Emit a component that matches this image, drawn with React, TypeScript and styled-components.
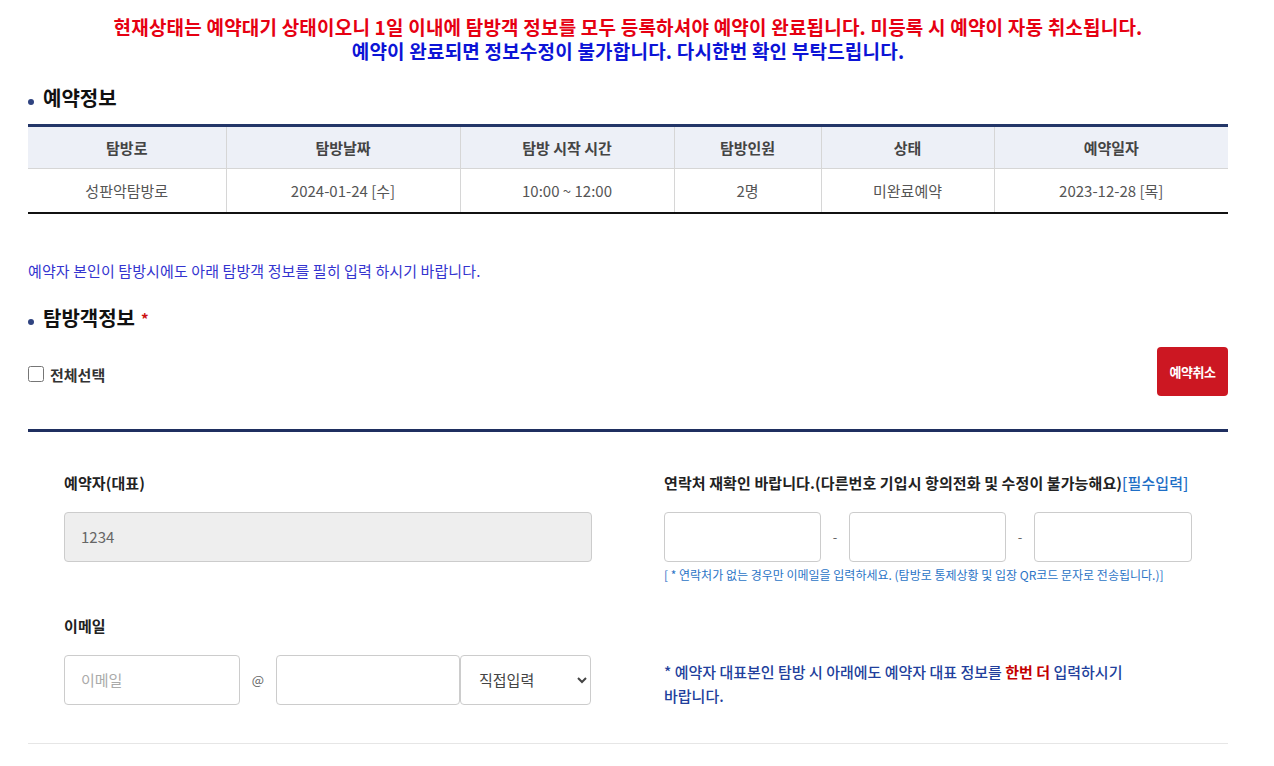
import React from 'react';
import styled, { createGlobalStyle } from 'styled-components';

const GlobalStyle = createGlobalStyle`
  body {
    margin: 0;
    background: #ffffff;
    font-family: 'Noto Sans CJK KR', 'Noto Sans', sans-serif;
    color: #222;
  }
  * {
    box-sizing: border-box;
  }
`;

const Page = styled.div`
  width: 1200px;
  margin: 0 28px;
  padding-top: 15px;
`;

const Notice = styled.div`
  text-align: center;
  font-size: 19px;
  font-weight: 700;
  line-height: 24px;
  letter-spacing: 0.2px;
`;

const NoticeLine = styled.p<{ $tone: 'red' | 'blue' }>`
  margin: 0;
  color: ${({ $tone }) => ($tone === 'red' ? '#e60012' : '#0c14d6')};
`;

const SectionTitle = styled.h2<{ $gap: number }>`
  display: flex;
  align-items: center;
  margin: ${({ $gap }) => $gap}px 0 0 0;
  font-size: 20px;
  font-weight: 700;
  line-height: 28px;
  color: #111;

  &::before {
    content: '';
    width: 6px;
    height: 6px;
    border-radius: 50%;
    background-color: #2f4380;
    margin: 8px 9px 0 0;
  }

  em {
    font-style: normal;
    color: #cc1111;
    font-size: 15px;
    margin-left: 6px;
    align-self: flex-start;
    margin-top: 1px;
  }
`;

const Table = styled.table`
  width: 100%;
  margin-top: 12px;
  border-collapse: collapse;
  table-layout: fixed;
  border-top: 3px solid #233668;
  border-bottom: 2px solid #111;
`;

const Th = styled.th`
  height: 43px;
  background-color: #edf0f7;
  font-size: 15px;
  font-weight: 700;
  color: #444;
  border-left: 1px solid #d6d6d6;
  border-bottom: 1px solid #d6d6d6;

  &:first-child {
    border-left: none;
  }
`;

const Td = styled.td`
  height: 44px;
  text-align: center;
  font-size: 15px;
  color: #555;
  border-left: 1px solid #d6d6d6;

  &:first-child {
    border-left: none;
  }
`;

const InfoText = styled.p`
  margin: 47px 0 0 0;
  font-size: 15px;
  line-height: 20px;
  color: #3434cf;
  letter-spacing: 0.1px;
`;

const ActionRow = styled.div`
  display: flex;
  align-items: center;
  justify-content: space-between;
  margin-top: 14px;
`;

const CheckLabel = styled.label`
  display: flex;
  align-items: center;
  gap: 6px;
  margin-top: 6px;
  font-size: 15px;
  font-weight: 700;
  color: #333;

  input {
    width: 16px;
    height: 16px;
    margin: 0;
  }
`;

const CancelButton = styled.button`
  width: 71px;
  height: 49px;
  border: none;
  border-radius: 4px;
  background-color: #cc1722;
  color: #ffffff;
  font-family: inherit;
  font-size: 13px;
  font-weight: 700;
  letter-spacing: -0.5px;
  cursor: pointer;
`;

const Divider = styled.div`
  margin-top: 33px;
  height: 3px;
  background-color: #1f2f60;
`;

const FormGrid = styled.div`
  display: grid;
  grid-template-columns: 1fr 1fr;
  column-gap: 72px;
  row-gap: 32px;
  padding: 41px 36px 38px;
  border-bottom: 1px solid #e6e6e6;
`;

const Field = styled.div`
  display: flex;
  flex-direction: column;
`;

const Label = styled.div`
  font-size: 15px;
  font-weight: 700;
  line-height: 20px;
  color: #222;
  letter-spacing: 0.1px;
  margin-bottom: 19px;
  white-space: nowrap;

  span {
    color: #1f6fc6;
    font-weight: 500;
  }
`;

const TextInput = styled.input<{ $width?: number }>`
  height: 50px;
  width: ${({ $width }) => ($width ? `${$width}px` : '100%')};
  padding: 0 16px;
  border: 1px solid #cccccc;
  border-radius: 4px;
  background-color: ${({ readOnly }) => (readOnly ? '#eeeeee' : '#ffffff')};
  font-family: inherit;
  font-size: 15px;
  color: #666;

  &::placeholder {
    color: #aaaaaa;
  }
`;

const InputRow = styled.div`
  display: flex;
  align-items: center;
`;

const Sep = styled.span<{ $width: number }>`
  width: ${({ $width }) => $width}px;
  text-align: center;
  font-size: 13px;
  color: #666;
`;

const Select = styled.select`
  height: 50px;
  width: 131px;
  padding: 0 10px 0 14px;
  border: 1px solid #cccccc;
  border-radius: 4px;
  background-color: #ffffff;
  font-family: inherit;
  font-size: 15px;
  color: #444;
`;

const HelpText = styled.p`
  margin: 4px 0 0 0;
  font-size: 12px;
  line-height: 18px;
  color: #2b74c6;
  white-space: nowrap;
`;

const Note = styled.p`
  align-self: end;
  margin: 0 0 -3px 0;
  max-width: 480px;
  font-size: 15px;
  font-weight: 500;
  line-height: 24px;
  color: #223f9c;
  word-break: keep-all;

  strong {
    color: #c40000;
    font-weight: 700;
  }
`;

const columns = [198, 234, 214, 147, 173, 234];
const headers = ['탐방로', '탐방날짜', '탐방 시작 시간', '탐방인원', '상태', '예약일자'];
const row = ['성판악탐방로', '2024-01-24 [수]', '10:00 ~ 12:00', '2명', '미완료예약', '2023-12-28 [목]'];

const App: React.FC = () => {
  return (
    <>
      <GlobalStyle />
      <Page>
        <Notice>
          <NoticeLine $tone='red'>
            현재상태는 예약대기 상태이오니 1일 이내에 탐방객 정보를 모두 등록하셔야 예약이 완료됩니다. 미등록 시 예약이 자동 취소됩니다.
          </NoticeLine>
          <NoticeLine $tone='blue'>
            예약이 완료되면 정보수정이 불가합니다. 다시한번 확인 부탁드립니다.
          </NoticeLine>
        </Notice>

        <SectionTitle $gap={21}>예약정보</SectionTitle>
        <Table>
          <colgroup>
            {columns.map((w, i) => (
              <col key={i} style={{ width: w }} />
            ))}
          </colgroup>
          <thead>
            <tr>
              {headers.map((h) => (
                <Th key={h}>{h}</Th>
              ))}
            </tr>
          </thead>
          <tbody>
            <tr>
              {row.map((c) => (
                <Td key={c}>{c}</Td>
              ))}
            </tr>
          </tbody>
        </Table>

        <InfoText>
          예약자 본인이 탐방시에도 아래 탐방객 정보를 필히 입력 하시기 바랍니다.
        </InfoText>

        <SectionTitle $gap={23}>
          탐방객정보<em>*</em>
        </SectionTitle>

        <ActionRow>
          <CheckLabel>
            <input type='checkbox' />
            전체선택
          </CheckLabel>
          <CancelButton>예약취소</CancelButton>
        </ActionRow>

        <Divider />

        <FormGrid>
          <Field>
            <Label>예약자(대표)</Label>
            <TextInput readOnly value='1234' />
          </Field>
          <Field>
            <Label>
              연락처 재확인 바랍니다.(다른번호 기입시 항의전화 및 수정이 불가능해요)
              <span>[필수입력]</span>
            </Label>
            <InputRow>
              <TextInput $width={157} />
              <Sep $width={28}>-</Sep>
              <TextInput $width={157} />
              <Sep $width={28}>-</Sep>
              <TextInput $width={158} />
            </InputRow>
            <HelpText>
              [ * 연락처가 없는 경우만 이메일을 입력하세요. (탐방로 통제상황 및 입장 QR코드 문자로 전송됩니다.)]
            </HelpText>
          </Field>

          <Field>
            <Label>이메일</Label>
            <InputRow>
              <TextInput $width={176} placeholder='이메일' />
              <Sep $width={36}>@</Sep>
              <TextInput $width={184} />
              <Select defaultValue='direct'>
                <option value='direct'>직접입력</option>
                <option value='naver'>naver.com</option>
                <option value='gmail'>gmail.com</option>
              </Select>
            </InputRow>
          </Field>
          <Note>
            * 예약자 대표본인 탐방 시 아래에도 예약자 대표 정보를 <strong>한번 더</strong> 입력하시기 바랍니다.
          </Note>
        </FormGrid>
      </Page>
    </>
  );
};

export default App;
